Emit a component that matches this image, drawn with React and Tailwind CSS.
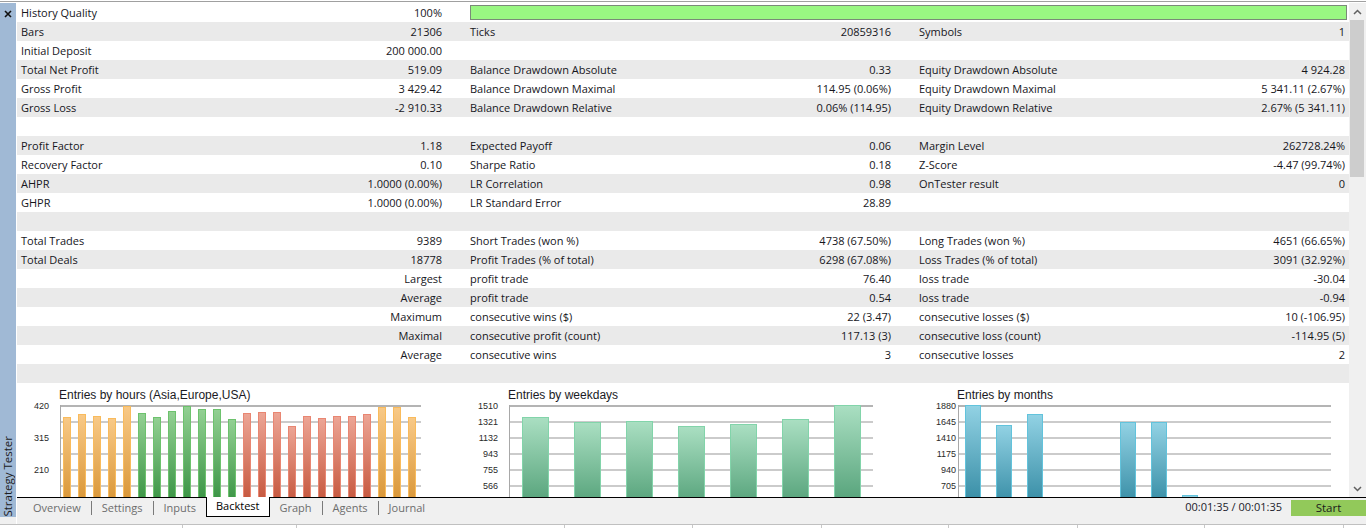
import React from 'react';

const rows = [
  ['History Quality', '100%', null],
  ['Bars', '21306', 'Ticks', '20859316', 'Symbols', '1'],
  ['Initial Deposit', '200 000.00', '', '', '', ''],
  ['Total Net Profit', '519.09', 'Balance Drawdown Absolute', '0.33', 'Equity Drawdown Absolute', '4 924.28'],
  ['Gross Profit', '3 429.42', 'Balance Drawdown Maximal', '114.95 (0.06%)', 'Equity Drawdown Maximal', '5 341.11 (2.67%)'],
  ['Gross Loss', '-2 910.33', 'Balance Drawdown Relative', '0.06% (114.95)', 'Equity Drawdown Relative', '2.67% (5 341.11)'],
  ['', '', '', '', '', ''],
  ['Profit Factor', '1.18', 'Expected Payoff', '0.06', 'Margin Level', '262728.24%'],
  ['Recovery Factor', '0.10', 'Sharpe Ratio', '0.18', 'Z-Score', '-4.47 (99.74%)'],
  ['AHPR', '1.0000 (0.00%)', 'LR Correlation', '0.98', 'OnTester result', '0'],
  ['GHPR', '1.0000 (0.00%)', 'LR Standard Error', '28.89', '', ''],
  ['', '', '', '', '', ''],
  ['Total Trades', '9389', 'Short Trades (won %)', '4738 (67.50%)', 'Long Trades (won %)', '4651 (66.65%)'],
  ['Total Deals', '18778', 'Profit Trades (% of total)', '6298 (67.08%)', 'Loss Trades (% of total)', '3091 (32.92%)'],
  ['', 'Largest', 'profit trade', '76.40', 'loss trade', '-30.04'],
  ['', 'Average', 'profit trade', '0.54', 'loss trade', '-0.94'],
  ['', 'Maximum', 'consecutive wins ($)', '22 (3.47)', 'consecutive losses ($)', '10 (-106.95)'],
  ['', 'Maximal', 'consecutive profit (count)', '117.13 (3)', 'consecutive loss (count)', '-114.95 (5)'],
  ['', 'Average', 'consecutive wins', '3', 'consecutive losses', '2'],
  ['', '', '', '', '', ''],
];

// bar tops in px from plot top, null = no bar
const hourTops = [12, 9, 11, 13, 1, 8, 12, 6, 1, 4, 4, 14, 8, 7, 7, 21, 11, 13, 11, 11, 9, 2, 2, 12];
const hourColor = (i) => (i < 5 || i > 20 ? 'orange' : i < 12 ? 'green' : 'red');

const charts = [
  {
    title: 'Entries by hours (Asia,Europe,USA)',
    labels: ['420', '', '315', '', '210', ''],
    labelW: 32, gap: 11, width: 361, slot: 15, off: 3, bw: 8,
    bars: hourTops.map((t, i) => ({ top: t, c: hourColor(i) })),
  },
  {
    title: 'Entries by weekdays',
    labels: ['1510', '1321', '1132', '943', '755', '566'],
    labelW: 32, gap: 11, width: 364, slot: 52, off: 13, bw: 27,
    bars: [12, 17, 16, 21, 19, 14, 0].map((t) => ({ top: t, c: 'teal' })),
  },
  {
    title: 'Entries by months',
    labels: ['1880', '1645', '1410', '1175', '940', '705'],
    labelW: 41, gap: 2, width: 373, slot: 31, off: 7, bw: 16,
    bars: [0, 20, 9, null, null, 17, 17, 90, null, null, null, null].map((t) => ({ top: t, c: 'blue' })),
  },
];

const grads = {
  orange: ['#f8c987', '#d48e2a', '#f9bb5c'],
  green: ['#93d093', '#2c8a38', '#6dc26d'],
  red: ['#eca595', '#bf4a2f', '#e98672'],
  teal: ['#aadfc2', '#4a9a70', '#82d4aa'],
  blue: ['#92d2e4', '#2a839c', '#62c3dc'],
};

function Chart({ c }) {
  return (
    <div className="flex flex-col">
      <div className="pl-[42px] mt-[5px] mb-[3px] h-[14px] leading-[14px] text-[12px] text-[#1a1a24] font-['Liberation_Sans',Arial,sans-serif] whitespace-nowrap">
        {c.title}
      </div>
      <div className="flex">
        <div style={{ width: c.labelW, marginRight: c.gap }} className="flex flex-col -mt-[7px] text-right text-[9px] text-[#2a2a2a] font-['Liberation_Sans',Arial,sans-serif]">
          {c.labels.map((l, i) => (
            <div key={i} className="h-[16px] leading-[16px]">{l}</div>
          ))}
        </div>
        <svg width={c.width} height="92" className="block">
          <defs>
            {Object.entries(grads).map(([k, g]) => (
              <linearGradient key={k} id={`gr-${k}-${c.slot}`} x1="0" y1="0" x2="0" y2="1">
                <stop offset="0" stopColor={g[0]} />
                <stop offset="1" stopColor={g[1]} />
              </linearGradient>
            ))}
          </defs>
          {[0, 1, 2, 3, 4, 5].map((k) => (
            <rect key={k} x="0" y={k * 16} width={c.width} height="2" fill={k === 0 ? '#b4b4b4' : '#cbcbcb'} />
          ))}
          <rect x="0" y="0" width="1" height="92" fill="#a8a8a8" />
          {c.bars.map((b, i) =>
            b.top === null ? null : (
              <rect
                key={i}
                x={c.off + i * c.slot + 0.5}
                y={b.top + 0.5}
                width={c.bw - 1}
                height={110 - b.top}
                fill={`url(#gr-${b.c}-${c.slot})`}
                stroke={grads[b.c][2]}
                strokeWidth="1"
              />
            )
          )}
        </svg>
      </div>
    </div>
  );
}

function Cell({ label, value, last }) {
  return (
    <div className={`${last ? 'flex-1 pr-1' : 'w-[449px] pr-6'} flex justify-between pl-1 whitespace-nowrap`}>
      <span>{label}</span>
      <span>{value}</span>
    </div>
  );
}

function Chevron({ up }) {
  return (
    <svg width="9" height="6" viewBox="0 0 9 6">
      <polyline
        points={up ? '1,5 4.5,1.5 8,5' : '1,1 4.5,4.5 8,1'}
        fill="none"
        stroke="#606060"
        strokeWidth="1.5"
      />
    </svg>
  );
}

const tabs = ['Overview', 'Settings', 'Inputs', 'Backtest', 'Graph', 'Agents', 'Journal'];
const statusPanes = [183, 114, 268, 128, 129, 127, 129, 127, 139];

export default function App() {
  return (
    <div className="w-[1366px] h-[528px] bg-white overflow-hidden flex flex-col font-['Open_Sans','Noto_Sans',sans-serif] text-[11px] text-[#16161c]">
      <div className="h-[3px] pt-px">
        <div className="h-px bg-[#a0a0a0]" />
      </div>

      <div className="flex h-[521px]">
        {/* left dock strip */}
        <div className="w-4 flex flex-col">
          <div className="flex-1 bg-[#a0b9d5] flex flex-col justify-between items-center">
            <svg width="8" height="8" viewBox="0 0 8 8" className="mt-[7px]">
              <path d="M1 1 L7 7 M7 1 L1 7" stroke="#111" strokeWidth="1.6" />
            </svg>
            <div className="[writing-mode:vertical-rl] rotate-180 text-[11.5px] leading-[16px] text-[#1c1c22] whitespace-nowrap">
              Strategy Tester
            </div>
          </div>
          <div className="h-[7px] bg-[#f0f0f0]" />
        </div>

        <div className="flex-1 flex flex-col">
          <div className="h-[494px] flex pl-px">
            <div className="w-[1332px] flex flex-col">
              {rows.map((r, i) => (
                <div key={i} className={`h-[19px] leading-[19px] flex ${i % 2 ? 'bg-[#eaeaea]' : 'bg-white'}`}>
                  <Cell label={r[0]} value={r[1]} />
                  {r[2] === null ? (
                    <div className="flex-1 pl-1 pr-[2px] py-[2px]">
                      <div className="h-full bg-[#99f782] border border-[#7a8a78]" />
                    </div>
                  ) : (
                    <>
                      <Cell label={r[2]} value={r[3]} />
                      <Cell label={r[4]} value={r[5]} last />
                    </>
                  )}
                </div>
              ))}
              <div className="flex-1 flex bg-white overflow-hidden">
                {charts.map((c, i) => (
                  <div key={i} className={i < 2 ? 'w-[449px]' : 'flex-1'}>
                    <Chart c={c} />
                  </div>
                ))}
              </div>
            </div>

            {/* scrollbar */}
            <div className="w-[17px] bg-[#f0f0f0] flex flex-col">
              <div className="h-[17px] flex items-center justify-center">
                <Chevron up />
              </div>
              <div className="h-[157px] ml-px mr-[2px] bg-[#cdcdcd]" />
              <div className="flex-1" />
              <div className="h-[17px] flex items-center justify-center">
                <Chevron />
              </div>
            </div>
          </div>

          {/* tab bar */}
          <div className="h-[27px] ml-px bg-[#f0f0f0] border-t border-black flex items-start">
            <div className="flex items-center h-[19px] pl-[6px]">
              {tabs.map((t, i) => {
                const active = t === 'Backtest';
                const sep = i > 0 && i !== 3 && i !== 4;
                return (
                  <React.Fragment key={t}>
                    {sep && <div className="w-px h-[14px] bg-[#7a7a7a]" />}
                    {active ? (
                      <div className="-mt-px self-start h-[20px] leading-[18px] px-[9px] bg-white border-x border-b border-black text-[11px] text-black">
                        {t}
                      </div>
                    ) : (
                      <div className="px-[10px] text-[11px] text-[#6d6d6d] leading-[19px]">{t}</div>
                    )}
                  </React.Fragment>
                );
              })}
            </div>
            <div className="ml-auto flex items-center h-[19px]">
              <span className="mr-[9px] text-[11px] text-[#1c1c2c]">00:01:35 / 00:01:35</span>
              <div className="w-[75px] h-[16px] bg-[#92c95a] flex items-center justify-center text-[11.5px] text-[#1a1a1a]">
                Start
              </div>
            </div>
          </div>
        </div>
      </div>

      {/* status strip */}
      <div className="h-[4px] border-t border-[#c0c0c0] bg-white flex">
        {statusPanes.map((w, i) => (
          <div key={i} style={{ width: w }} className="h-full border-r border-[#c8c8c8]" />
        ))}
      </div>
    </div>
  );
}
